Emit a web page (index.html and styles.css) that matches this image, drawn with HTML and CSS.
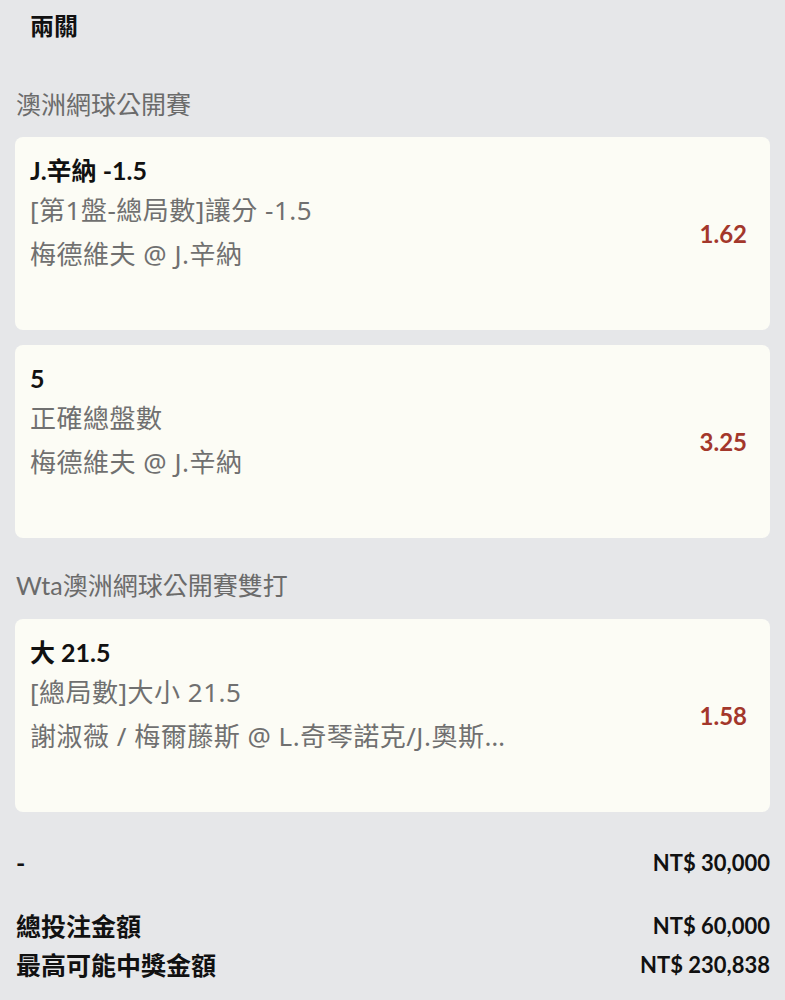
FILE: index.html
```html
<!DOCTYPE html>
<html lang="zh-Hant">
<head>
    <meta charset="UTF-8">
    <meta name="viewport" content="width=device-width, initial-scale=1.0">
    <title>兩關</title>
    <link rel="stylesheet" href="styles.css">
</head>
<body>
    <h1 class="page-title">兩關</h1>

    <div class="league">澳洲網球公開賽</div>
    <div class="bet-card">
        <div class="bet-info">
            <div class="bet-pick">J.辛納 -1.5</div>
            <div class="bet-line">[第1盤-總局數]讓分 -1.5</div>
            <div class="bet-line">梅德維夫 @ J.辛納</div>
        </div>
        <div class="bet-odds">1.62</div>
    </div>
    <div class="bet-card">
        <div class="bet-info">
            <div class="bet-pick">5</div>
            <div class="bet-line">正確總盤數</div>
            <div class="bet-line">梅德維夫 @ J.辛納</div>
        </div>
        <div class="bet-odds">3.25</div>
    </div>

    <div class="league league-next">Wta澳洲網球公開賽雙打</div>
    <div class="bet-card">
        <div class="bet-info">
            <div class="bet-pick">大 21.5</div>
            <div class="bet-line">[總局數]大小 21.5</div>
            <div class="bet-line">謝淑薇 / 梅爾藤斯 @ L.奇琴諾克/J.奧斯汀</div>
        </div>
        <div class="bet-odds">1.58</div>
    </div>

    <div class="summary">
        <div class="summary-row stake-row"><span>-</span><span class="amount">NT$ 30,000</span></div>
        <div class="summary-row total-row"><span>總投注金額</span><span class="amount">NT$ 60,000</span></div>
        <div class="summary-row"><span>最高可能中獎金額</span><span class="amount">NT$ 230,838</span></div>
    </div>
</body>
</html>
```

FILE: styles.css
```css
body {
    margin: 0;
    background-color: #e6e7e9;
    color: #111;
    font-family: Lato, "Noto Sans CJK TC", sans-serif;
}
.page-title {
    margin: 0;
    padding: 10px 30px 0;
    font-size: 24px;
    line-height: 32px;
    font-weight: bold;
}
.league {
    margin: 45px 16px 16px;
    font-size: 25px;
    line-height: 34px;
    color: #6b6b6b;
}
.league-next {
    margin-top: 30px;
    margin-bottom: 17px;
}
.bet-card {
    display: flex;
    align-items: center;
    justify-content: space-between;
    height: 193px;
    box-sizing: border-box;
    margin: 0 15px 15px;
    padding: 0 23px 0 15px;
    background-color: #fcfcf5;
    border-radius: 8px;
}
.bet-info {
    width: 479px;
    align-self: flex-start;
    padding-top: 18px;
}
.bet-pick {
    font-size: 25px;
    line-height: 30px;
    font-weight: bold;
}
.bet-line {
    font-family: "Noto Sans", "Noto Sans CJK TC", sans-serif;
    font-size: 26px;
    line-height: 44px;
    letter-spacing: 0.5px;
    color: #707070;
    white-space: nowrap;
    overflow: hidden;
    text-overflow: ellipsis;
}
.bet-pick + .bet-line {
    margin-top: 3px;
}
.bet-odds {
    font-size: 24px;
    font-weight: bold;
    color: #a3372b;
}
.summary {
    margin-top: 32px;
    padding: 0 15px 0 16px;
}
.summary-row {
    display: flex;
    justify-content: space-between;
    align-items: center;
    height: 36px;
    font-size: 25px;
    font-weight: bold;
}
.summary-row .amount {
    font-size: 22px;
}
.stake-row {
    margin-bottom: 27px;
}
.total-row {
    margin-bottom: 3px;
}
```
